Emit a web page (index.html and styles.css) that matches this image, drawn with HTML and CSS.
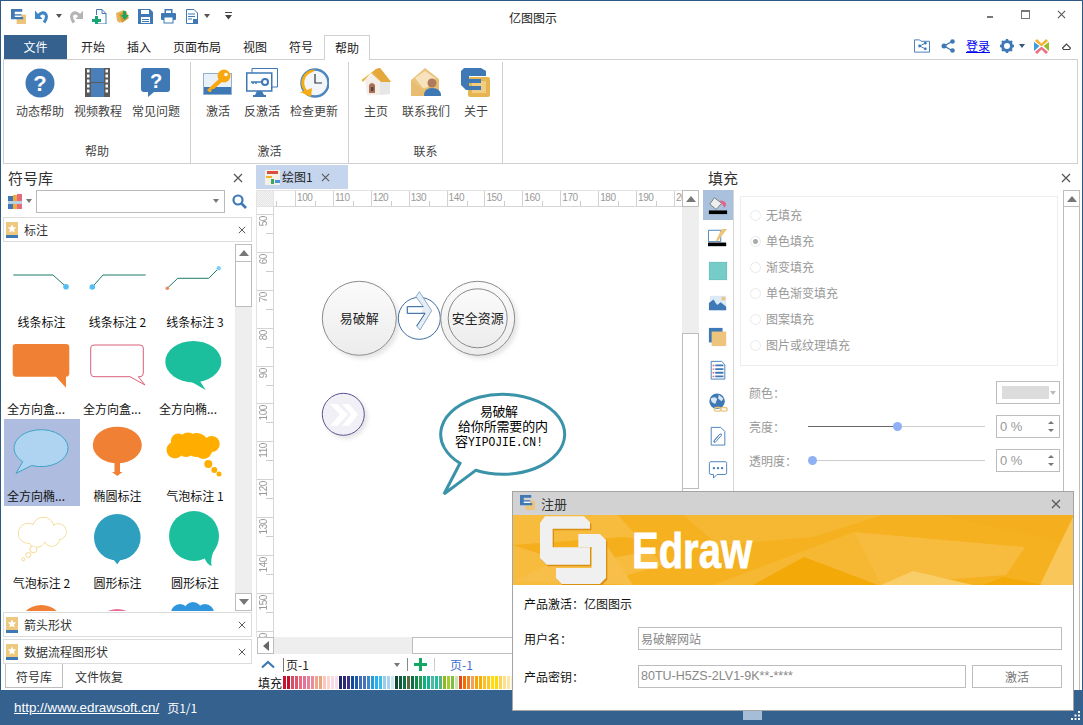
FILE: index.html
```html
<!DOCTYPE html>
<html lang="zh-CN">
<head>
<meta charset="utf-8">
<title>亿图图示</title>
<link rel="stylesheet" href="styles.css">
</head>
<body>
<svg class="defs" width="0" height="0" aria-hidden="true">
  <symbol id="logo" viewBox="0 0 16 16">
    <rect x="6" y="6" width="10" height="10" fill="#edc47c"/>
    <path d="M0 0H12V3H4V5.500H11V8.500H13V11H0Z" fill="#3f79b5"/>
    <path d="M4 7H11V8.500H4Z" fill="#fff"/>
  </symbol>
  <symbol id="star" viewBox="0 0 12 16">
    <rect width="12" height="16" fill="#edc97f"/>
    <rect y="13" width="12" height="3" fill="#3f79b5"/>
    <path d="M6 2.500 7.300 5.300 10.300 5.600 8 7.600 8.700 10.600 6 9 3.300 10.600 4 7.600 1.700 5.600 4.700 5.300Z" fill="#fff"/>
  </symbol>
  <symbol id="x" viewBox="0 0 10 10">
    <path d="M1 1 9 9M9 1 1 9" stroke="#555" stroke-width="1.200" fill="none"/>
  </symbol>
</svg>
<div class="app">
  <header class="titlebar">
    <div class="qat">
      <svg class="q" viewBox="0 0 16 16"><use href="#logo"/></svg>
      <svg class="q" viewBox="0 0 15 15"><path d="M4 7Q8 2 11.500 5Q14 8 10 13.500" fill="none" stroke="#3f86c6" stroke-width="3"/><path d="M1 1.500V10H8.500Z" fill="#3f86c6"/></svg>
      <span class="caret q-caret"></span>
      <svg class="q" viewBox="0 0 15 15"><path d="M11 7Q7 2 3.500 5Q1 8 5 13.500" fill="none" stroke="#b4b4b4" stroke-width="3"/><path d="M14 1.500V10H6.500Z" fill="#b4b4b4"/></svg>
      <svg class="q" viewBox="0 0 15 15"><path d="M4.500 6V.5H10L14 4.500V15H6" fill="#fff" stroke="#3f79b5"/><path d="M10 .5V4.500H14" fill="none" stroke="#3f79b5"/><path d="M3 7H6V10H9V13H6V16H3V13H0V10H3Z" fill="#17a673"/></svg>
      <svg class="q" viewBox="0 0 15 15"><path d="M1 4 9 1 12 8 5 14 2 12Z" fill="#e8b458"/><path d="M4 5 11 2 14 9 7 14Z" fill="#d69a3a"/><path d="M8 2H11V6H14L9.500 11 6 6H8Z" fill="#1ea55b"/></svg>
      <svg class="q" viewBox="0 0 15 15"><path d="M0 0H12L15 3V15H0Z" fill="#3f79b5"/><rect x="3" y="1" width="8" height="4" fill="#fff"/><rect x="3" y="8" width="9" height="6" fill="#fff"/><rect x="4" y="10" width="7" height="1" fill="#3f79b5"/><rect x="4" y="12" width="7" height="1" fill="#3f79b5"/></svg>
      <svg class="q" viewBox="0 0 15 15"><rect x="3.500" y="0" width="8" height="5" fill="#3f79b5"/><rect x="5" y="1.500" width="5" height="3" fill="#fff"/><rect y="4" width="15" height="7" rx="1" fill="#3f79b5"/><rect x="3" y="8" width="9" height="6" fill="#fff" stroke="#3f79b5"/></svg>
      <svg class="q q-doc" viewBox="0 0 12 15"><path d="M.5 .5H8L11.500 4V14.500H.5Z" fill="#fff" stroke="#3f79b5"/><path d="M2 5H9M2 7.500H9M2 10H6" stroke="#3f79b5"/><rect x="7" y="10" width="5" height="5" fill="#3f79b5"/></svg>
      <span class="caret q-caret"></span>
      <svg class="q-menu" viewBox="0 0 7 8"><path d="M0 0H7V1H0ZM0 3H7L3.500 7.500Z" fill="#444"/></svg>
    </div>
    <h1 class="app-title">亿图图示</h1>
    <div class="win-controls">
      <span class="win-min"></span>
      <span class="win-max"></span>
      <svg class="win-close" viewBox="0 0 10 10"><use href="#x"/></svg>
    </div>
  </header>

  <nav class="tabbar">
    <a class="tab-file">文件</a>
    <a class="tab">开始</a>
    <a class="tab">插入</a>
    <a class="tab">页面布局</a>
    <a class="tab">视图</a>
    <a class="tab">符号</a>
    <a class="tab tab-active">帮助</a>
    <div class="tab-tools">
      <svg class="tool-icon" viewBox="0 0 17 14"><path d="M.5 .5H6L7.500 2H16.500V13.500H.5Z" fill="#fff" stroke="#3f79b5"/><path d="M12 4 6 7 12 10" fill="none" stroke="#3f79b5"/><circle cx="6" cy="7" r="1.500" fill="#3f79b5"/><circle cx="12" cy="4" r="1.500" fill="#3f79b5"/><circle cx="12" cy="10" r="1.500" fill="#3f79b5"/></svg>
      <svg class="tool-icon tool-share" viewBox="0 0 14 14"><path d="M11 2.500 3 7 11 11.500" fill="none" stroke="#3f79b5" stroke-width="1.400"/><circle cx="3" cy="7" r="2.500" fill="#3f79b5"/><circle cx="11.500" cy="2.500" r="2.300" fill="#3f79b5"/><circle cx="11.500" cy="11.500" r="2.300" fill="#3f79b5"/></svg>
      <a class="login">登录</a>
      <svg class="tool-icon tool-gear" viewBox="0 0 14 14"><circle cx="7" cy="7" r="4.500" fill="none" stroke="#3f79b5" stroke-width="3"/><path d="M7 0V14M0 7H14M2 2 12 12M12 2 2 12" stroke="#3f79b5" stroke-width="2.400" stroke-dasharray="2.500 9 2.500"/></svg>
      <span class="caret caret-dark"></span>
      <svg class="tool-icon tool-brand" viewBox="0 0 15 15"><path d="M3 0 7.500 4.500 12 0 14 2 8 7H7L1 2Z" fill="#f6b02c"/><path d="M0 3 5.500 7 0 12Z" fill="#3d9be0"/><path d="M15 3 9.500 7 15 12Z" fill="#9bbb2f"/><path d="M7 8H8L14 13 12 15 7.500 10.500 3 15 1 13Z" fill="#ee6d7f"/></svg>
      <svg class="tool-collapse" viewBox="0 0 9 7"><path d="M.5 5 4.500 1 8.500 5 7.500 6.500H1.500Z" fill="none" stroke="#444" stroke-width="1.200"/></svg>
    </div>
  </nav>

  <section class="ribbon">
    <div class="rgroup">
      <div class="rbtns">
        <div class="rbtn rbtn-58">
          <svg class="ricon" viewBox="0 0 30 30"><circle cx="15" cy="15" r="14.500" fill="#3f79b5"/><text x="15" y="23" class="glyph-q">?</text></svg>
          <span>动态帮助</span>
        </div>
        <div class="rbtn rbtn-58">
          <svg class="ricon" viewBox="0 0 30 30"><rect x="2" y="0" width="25" height="29" fill="#5a5a5a"/><rect x="8" y="0" width="13" height="14" fill="#4a7fb9"/><rect x="8" y="15" width="13" height="14" fill="#4a7fb9"/><path d="M4 3H6.500M4 8H6.500M4 13H6.500M4 18H6.500M4 23H6.500M22.500 3H25M22.500 8H25M22.500 13H25M22.500 18H25M22.500 23H25" stroke="#fff" stroke-width="3"/></svg>
          <span>视频教程</span>
        </div>
        <div class="rbtn rbtn-58">
          <svg class="ricon" viewBox="0 0 30 30"><path d="M3 0H26Q29 0 29 3V21Q29 24 26 24H13L7 29V24H3Q0 24 0 21V3Q0 0 3 0Z" fill="#3f79b5"/><text x="15" y="20" class="glyph-q glyph-q-sm">?</text></svg>
          <span>常见问题</span>
        </div>
      </div>
      <div class="rgroup-label">帮助</div>
    </div>
    <div class="rgroup">
      <div class="rbtns rbtns-2">
        <div class="rbtn rbtn-44">
          <svg class="ricon" viewBox="0 0 30 30"><rect x=".5" y="5.500" width="28" height="21" fill="#eaf0f7" stroke="#8fb0d2"/><rect x="1" y="19" width="27" height="7" fill="#3f79b5"/><circle cx="21" cy="8" r="6.500" fill="#f8a80e"/><circle cx="23" cy="6.500" r="1.800" fill="#fff"/><path d="M17 10 4 22 6 24 8 24 9 21 11 21 20 13Z" fill="#f8a80e"/></svg>
          <span>激活</span>
        </div>
        <div class="rbtn rbtn-44">
          <svg class="ricon ricon-w" viewBox="0 0 32 30"><path d="M6 .5H31.500V19H26" fill="#fff" stroke="#3f79b5"/><path d="M6 .5V5" stroke="#3f79b5"/><rect x=".75" y="5" width="25" height="18" fill="#fff" stroke="#3f79b5" stroke-width="1.500"/><path d="M9 27H18L16 23H11Z" fill="#3f79b5"/><rect x="7" y="27" width="13" height="2" fill="#3f79b5"/><circle cx="19" cy="14" r="3" fill="none" stroke="#3f79b5" stroke-width="2"/><path d="M5 14H16M7 14V16M10 14V16" stroke="#3f79b5" stroke-width="1.500"/></svg>
          <span>反激活</span>
        </div>
        <div class="rbtn rbtn-60">
          <svg class="ricon" viewBox="0 0 30 30"><circle cx="16" cy="15" r="13.500" fill="#f2f6fa" stroke="#4f86bd" stroke-width="2.500"/><path d="M16 1.500A13.500 13.500 0 0 0 5 23L1 24 12 29 13 20 8 22A11 11 0 0 1 14 4Z" fill="#f8ac13"/><path d="M16 6V15H23" fill="none" stroke="#333" stroke-width="1.200"/></svg>
          <span>检查更新</span>
        </div>
      </div>
      <div class="rgroup-label">激活</div>
    </div>
    <div class="rgroup">
      <div class="rbtns rbtns-2">
        <div class="rbtn rbtn-44">
          <svg class="ricon" viewBox="0 0 30 30"><path d="M4 12 12 5 19 12 19 27 6 27Z" fill="#f3eee8"/><path d="M19 12H29V26L19 27Z" fill="#e6e6e6"/><path d="M.5 12 15 1 19 0 30 14 19 13 10 5 2 14Z" fill="#e9b348"/><path d="M15 1 19 0 30 14 20 14 12 4Z" fill="#e5a93b"/><path d="M8 25V17Q11 13 14 17V25Z" fill="#ad6f53"/><rect x="10" y="19" width="2.500" height="4" fill="#5a4238"/></svg>
          <span>主页</span>
        </div>
        <div class="rbtn rbtn-56">
          <svg class="ricon" viewBox="0 0 30 30"><path d="M0 12 14 0 28 11V28H0Z" fill="#ebc47c"/><path d="M4 10 14 3 24 10 24 18 12 20Z" fill="#f6e3bd"/><path d="M0 28V13L13 22 28 11V28Z" fill="#e9bd70"/><circle cx="21" cy="15" r="4.500" fill="#b07a5d"/><path d="M13 28Q13 20 21 20Q30 20 30 28Z" fill="#3f79b5"/></svg>
          <span>联系我们</span>
        </div>
        <div class="rbtn rbtn-44">
          <svg class="ricon" viewBox="0 0 30 30"><rect x="7" y="9" width="22" height="20" rx="2" fill="#e5b552"/><rect x="11" y="13" width="14" height="12" fill="#f0cd81"/><path d="M3 0H20L25 3V8H8V11H20V15H8V18H20V22H5L0 17V3Z" fill="#3f79b5"/></svg>
          <span>关于</span>
        </div>
      </div>
      <div class="rgroup-label">联系</div>
    </div>
  </section>

  <main class="workspace">
    <aside class="library">
      <div class="panel-head">
        <h2>符号库</h2>
        <svg class="panel-x" viewBox="0 0 10 10"><use href="#x"/></svg>
      </div>
      <div class="search-row">
        <svg class="books" viewBox="0 0 14 15"><rect x="0" y="2" width="5" height="13" fill="#3f79b5"/><rect x="5" y="1" width="4" height="14" fill="#f2a93b"/><rect x="9" y="0" width="5" height="15" fill="#e66a7a"/><rect y="7" width="14" height="3" fill="#b9cfe2"/></svg>
        <span class="caret caret-gray"></span>
        <div class="combo"><span class="caret caret-gray"></span></div>
        <svg class="search-icon" viewBox="0 0 15 15"><circle cx="6" cy="6" r="4.500" fill="none" stroke="#3f79b5" stroke-width="2.200"/><path d="M9.500 9.500 14 14" stroke="#3f79b5" stroke-width="2.600"/></svg>
      </div>
      <div class="cat-row">
        <svg class="cat-star"><use href="#star"/></svg>
        <span>标注</span>
        <svg class="cat-x" viewBox="0 0 10 10"><use href="#x"/></svg>
      </div>
      <div class="shape-area">
        <div class="shape-grid">
          <figure class="cell">
            <svg class="shape" viewBox="0 0 76 66"><path d="M9.300 30H49L62 41.700" fill="none" stroke="#1c7d66"/><circle cx="62" cy="41.700" r="2.800" fill="#55bff2"/></svg>
            <figcaption>线条标注</figcaption>
          </figure>
          <figure class="cell">
            <svg class="shape" viewBox="0 0 76 66"><path d="M12.300 42 23 30H65.700" fill="none" stroke="#1c7d66"/><circle cx="12.300" cy="42" r="2.800" fill="#55bff2"/></svg>
            <figcaption>线条标注 2</figcaption>
          </figure>
          <figure class="cell">
            <svg class="shape" viewBox="0 0 76 66"><path d="M11.300 43.300 21.700 33.300H52.700L62.700 23.300" fill="none" stroke="#1c7d66"/><circle cx="11.300" cy="43.300" r="1.800" fill="#f08a5a"/><circle cx="62.700" cy="23.300" r="2.200" fill="#7fd0f5"/></svg>
            <figcaption>线条标注 3</figcaption>
          </figure>
          <figure class="cell">
            <svg class="shape" viewBox="0 0 76 66"><path d="M12 12H62Q65.300 12 65.300 15V41Q65.300 44.700 62 44.700V55.700L52 44.700H12Q8.700 44.700 8.700 41V15Q8.700 12 12 12Z" fill="#f08034"/></svg>
            <figcaption class="left">全方向盒...</figcaption>
          </figure>
          <figure class="cell">
            <svg class="shape" viewBox="0 0 76 66"><path d="M14 13H60Q63.300 13 63.300 16V41Q63.300 44.700 60 44.700H58.300L65 53 50 44.700H14Q10.700 44.700 10.700 41V16Q10.700 13 14 13Z" fill="#fff" stroke="#d9607a"/></svg>
            <figcaption class="left">全方向盒...</figcaption>
          </figure>
          <figure class="cell">
            <svg class="shape" viewBox="0 0 76 66"><ellipse cx="37.300" cy="29.700" rx="28" ry="20.700" fill="#1cbf9d"/><path d="M34 49 49.700 58 42 46Z" fill="#1cbf9d"/></svg>
            <figcaption class="left">全方向椭...</figcaption>
          </figure>
          <figure class="cell cell-selected">
            <svg class="shape" viewBox="0 0 76 66"><path d="M18.700 42.700A27 18.500 0 1 1 27.700 46.500L12 54.300Z" fill="#aed4f2" stroke="#3fa5c5"/></svg>
            <figcaption class="left">全方向椭...</figcaption>
          </figure>
          <figure class="cell">
            <svg class="shape" viewBox="0 0 76 66"><ellipse cx="37.300" cy="26" rx="24.500" ry="18.300" fill="#f08034"/><path d="M34.500 42H40V53H42.500L37.300 57 32 53H34.500Z" fill="#f08034"/></svg>
            <figcaption>椭圆标注</figcaption>
          </figure>
          <figure class="cell">
            <svg class="shape" viewBox="0 0 76 66"><g fill="#ffae00"><circle cx="19" cy="31" r="8.500"/><circle cx="22.300" cy="22" r="7.500"/><circle cx="40.700" cy="26" r="12"/><circle cx="55.700" cy="25" r="8"/><circle cx="32" cy="22" r="8.500"/><circle cx="47.300" cy="31" r="9"/><circle cx="30" cy="30" r="8"/><circle cx="52.300" cy="45" r="4"/><circle cx="58.300" cy="51" r="3"/><circle cx="63" cy="55" r="2.500"/></g></svg>
            <figcaption>气泡标注 1</figcaption>
          </figure>
          <figure class="cell">
            <svg class="shape" viewBox="0 0 76 66"><g fill="#fff" stroke="#f6d98f"><circle cx="24.300" cy="27.300" r="10"/><circle cx="39.300" cy="22.300" r="11"/><circle cx="54.300" cy="25.700" r="8"/><circle cx="32.700" cy="32.300" r="9"/><circle cx="47.700" cy="32.300" r="8"/><circle cx="29.300" cy="43.300" r="3.500"/><circle cx="24.300" cy="49" r="2.500"/><circle cx="19.300" cy="53.300" r="1.500"/></g><g fill="#fff"><circle cx="24.300" cy="27.300" r="9.500"/><circle cx="39.300" cy="22.300" r="10.500"/><circle cx="54.300" cy="25.700" r="7.500"/><circle cx="32.700" cy="32.300" r="8.500"/><circle cx="47.700" cy="32.300" r="7.500"/></g></svg>
            <figcaption>气泡标注 2</figcaption>
          </figure>
          <figure class="cell">
            <svg class="shape" viewBox="0 0 76 66"><circle cx="37.300" cy="31.300" r="23.300" fill="#2e9fbe"/><path d="M33 53 37.300 58.300 41 53Z" fill="#2e9fbe"/></svg>
            <figcaption>圆形标注</figcaption>
          </figure>
          <figure class="cell">
            <svg class="shape" viewBox="0 0 76 66"><circle cx="38" cy="30" r="25" fill="#1cbf9d"/><path d="M48 50Q53 52 51 49L58 44Q54 54 55.700 60Q50 58 48 50Z" fill="#1cbf9d"/></svg>
            <figcaption>圆形标注</figcaption>
          </figure>
          <figure class="cell">
            <svg class="shape" viewBox="0 0 76 66"><circle cx="37.300" cy="35" r="23" fill="#f08034"/></svg>
          </figure>
          <figure class="cell">
            <svg class="shape" viewBox="0 0 76 66"><circle cx="37.300" cy="39" r="23" fill="#e76d9a"/></svg>
          </figure>
          <figure class="cell">
            <svg class="shape" viewBox="0 0 76 66"><g fill="#2f96dd"><circle cx="24" cy="20" r="9"/><circle cx="37" cy="18" r="9"/><circle cx="49" cy="20" r="9"/></g></svg>
          </figure>
        </div>
        <div class="scrollbar scrollbar-lib">
          <span class="sb-btn sb-up"></span>
          <span class="sb-thumb"></span>
          <span class="sb-btn sb-down"></span>
        </div>
      </div>
      <div class="cat-row cat-row-low">
        <svg class="cat-star"><use href="#star"/></svg>
        <span>箭头形状</span>
        <svg class="cat-x" viewBox="0 0 10 10"><use href="#x"/></svg>
      </div>
      <div class="cat-row cat-row-low2">
        <svg class="cat-star"><use href="#star"/></svg>
        <span>数据流程图形状</span>
        <svg class="cat-x" viewBox="0 0 10 10"><use href="#x"/></svg>
      </div>
      <div class="lib-tabs">
        <span class="lib-tab lib-tab-on">符号库</span>
        <span class="lib-tab">文件恢复</span>
      </div>
    </aside>

    <section class="center">
      <div class="doc-tabs">
        <div class="doc-tab">
          <svg class="doc-icon" viewBox="0 0 15 15"><rect width="15" height="15" fill="#f4f1e6"/><rect x="2" y="1" width="11" height="3" fill="#d94f3d"/><rect x="1" y="6" width="6" height="2" fill="#f1b32b"/><rect x="6" y="9" width="3" height="5" fill="#39a85c"/><rect x="10" y="10" width="5" height="3" fill="#4c94d8"/></svg>
          <span>绘图1</span>
          <svg class="doc-x" viewBox="0 0 10 10"><use href="#x"/></svg>
        </div>
      </div>
      <div class="doc-grid">
        <div class="ruler-corner"></div>
        <div class="hruler">
          <span>100</span><span>110</span><span>120</span><span>130</span><span>140</span><span>150</span><span>160</span><span>170</span><span>180</span><span>190</span><span>200</span>
        </div>
        <div class="scrollbar scrollbar-doc">
          <span class="sb-btn sb-up"></span>
          <span class="sb-track"></span>
          <span class="sb-thumb"></span>
        </div>
        <div class="vruler">
          <span><b>50</b></span><span><b>60</b></span><span><b>70</b></span><span><b>80</b></span><span><b>90</b></span><span><b>100</b></span><span><b>110</b></span><span><b>120</b></span><span><b>130</b></span><span><b>140</b></span><span><b>150</b></span><span><b>160</b></span>
        </div>
        <div class="canvas">
          <svg class="drawing" viewBox="274 207 407 430">
            <defs>
              <linearGradient id="disc" x1="0" y1="0" x2="0" y2="1"><stop offset="0" stop-color="#fbfbfb"/><stop offset="1" stop-color="#ececec"/></linearGradient>
              <filter id="soft" x="-20%" y="-20%" width="150%" height="150%"><feDropShadow dx="3" dy="3" stdDeviation="2" flood-color="#000" flood-opacity=".1"/></filter>
            </defs>
            <circle cx="359.300" cy="318.300" r="37" fill="url(#disc)" stroke="#8a8a8a" filter="url(#soft)"/>
            <text x="359.300" y="322.500" class="dtext">易破解</text>
            <circle cx="419.300" cy="318.300" r="21" fill="#fff" stroke="#3e6da3"/>
            <path d="M419.300 291.700 431.700 310.700 420 330 416.700 326 425 313.300H407.300V306.700H423.300L416 296.700Z" fill="#e6edf5" stroke="#7099c3" stroke-width=".8"/>
            <path d="M423.300 306.700H407.300V313.300H425L416.700 326" fill="#fff" stroke="#2f659e"/>
            <circle cx="477.700" cy="318.300" r="37" fill="url(#disc)" stroke="#8a8a8a" filter="url(#soft)"/>
            <circle cx="477.700" cy="318.300" r="29.500" fill="url(#disc)" stroke="#8a8a8a"/>
            <text x="477.700" y="322.500" class="dtext">安全资源</text>
            <circle cx="343.300" cy="414.300" r="21" fill="#f1f0f6" stroke="#5e4f8e" filter="url(#soft)"/>
            <path d="M330 404 337 404 348 414.500 337 426 330 426 340 414.500ZM342 404 349 404 358 414.500 349 426 342 426 351 414.500Z" fill="#fff"/>
            <path d="M460 463.300A62 40 0 1 1 475.700 470.300L444 494Z" fill="#fff" stroke="#3a93a8" stroke-width="3"/>
            <text x="480" y="415.500" class="btext" textLength="38">易破解</text>
            <text x="458" y="431" class="btext" textLength="90">给你所需要的内</text>
            <text x="455" y="446" class="btext">容</text>
            <text x="468" y="446" class="btext-latin" textLength="75" lengthAdjust="spacingAndGlyphs">YIPOJIE.CN!</text>
          </svg>
        </div>
        <div class="hscroll">
          <span class="hs-left"></span>
          <span class="hs-thumb"></span>
        </div>
      </div>
      <div class="page-bar">
        <svg class="page-up" viewBox="0 0 14 9"><path d="M1 7.500 7 2 13 7.500" fill="none" stroke="#3f79b5" stroke-width="2.200"/></svg>
        <span class="page-sel">页-1</span>
        <span class="caret caret-gray page-caret"></span>
        <span class="page-sep"></span>
        <svg class="page-add" viewBox="0 0 13 13"><path d="M5 0H8V5H13V8H8V13H5V8H0V5H5Z" fill="#12a863"/></svg>
        <span class="page-sep page-sep-light"></span>
        <span class="page-cur">页-1</span>
      </div>
      <div class="palette-row">
        <span class="palette-label">填充</span>
        <div class="palette">
          <i style="background:#c9152c"></i><i style="background:#c30f2a"></i><i style="background:#d4506a"></i><i style="background:#e0556f"></i><i style="background:#ec6a80"></i><i style="background:#e27399"></i><i style="background:#e3829a"></i><i style="background:#e98b9b"></i><i style="background:#f2a585"></i><i style="background:#e8a57e"></i><i style="background:#fcc6bd"></i><i style="background:#fbd5cf"></i><i style="background:#f3dce3"></i><i style="background:#f9dcea"></i><i style="background:#1c2a6b"></i><i style="background:#2a2a70"></i><i style="background:#3f2f8a"></i><i style="background:#0f4a9d"></i><i style="background:#1f5aa7"></i><i style="background:#3d6fb5"></i><i style="background:#4c6fb5"></i><i style="background:#3c8ccc"></i><i style="background:#2a9ad8"></i><i style="background:#20b3f0"></i><i style="background:#35bdf0"></i><i style="background:#9ccbe8"></i><i style="background:#a8d3ee"></i><i style="background:#cfe7f0"></i><i style="background:#0d4d2e"></i><i style="background:#0f5a3a"></i><i style="background:#0c7048"></i><i style="background:#5d6b3a"></i><i style="background:#0f6e45"></i><i style="background:#0f8a50"></i><i style="background:#2a9a4c"></i><i style="background:#0fb07f"></i><i style="background:#14b58d"></i><i style="background:#52b8a0"></i><i style="background:#20c0a0"></i><i style="background:#4fb587"></i><i style="background:#8fba1f"></i><i style="background:#a8c92f"></i><i style="background:#7dbf3f"></i><i style="background:#c8e2b0"></i><i style="background:#e2481c"></i><i style="background:#f07000"></i><i style="background:#f0852a"></i><i style="background:#f0a060"></i><i style="background:#f5a800"></i><i style="background:#f8ae00"></i><i style="background:#fbc028"></i><i style="background:#fcc72c"></i><i style="background:#ffe000"></i><i style="background:#ffd900"></i><i style="background:#fcd15a"></i><i style="background:#fce08a"></i><i style="background:#fbe6a8"></i><i style="background:#fdf0c8"></i>
        </div>
      </div>
    </section>

    <aside class="props">
      <div class="panel-head panel-head-props">
        <h2>填充</h2>
        <svg class="panel-x" viewBox="0 0 10 10"><use href="#x"/></svg>
      </div>
      <div class="props-body">
        <div class="strip">
          <div class="strip-item strip-on">
            <svg viewBox="0 0 22 22"><path d="M7 3 15 9 9 16 2 10Z" fill="#eee" stroke="#777"/><path d="M13 6Q20 6 20 11L18 14 15 9Z" fill="#e5628a"/><rect x="1" y="17" width="20" height="4" fill="#000"/></svg>
          </div>
          <div class="strip-item">
            <svg viewBox="0 0 22 22"><path d="M.5 2.500H14V15H.5Z" fill="#fff" stroke="#3f79b5"/><path d="M15 1H21L11 14 8 15Z" fill="#edc47c"/><rect y="16" width="20" height="4" fill="#000"/></svg>
          </div>
          <div class="strip-item">
            <svg viewBox="0 0 22 22"><rect x="1.500" y="1.500" width="19" height="19" fill="#76cdc8" stroke="#63bfb9"/></svg>
          </div>
          <div class="strip-item">
            <svg viewBox="0 0 22 22"><rect x="2" y="2" width="18" height="16" fill="#dceaf7"/><rect x="15" y="3" width="4" height="4" fill="#edc47c"/><path d="M1 18V10L6 6 10 12 14 9 20 14V18Z" fill="#3f79b5"/></svg>
          </div>
          <div class="strip-item">
            <svg viewBox="0 0 22 22"><rect x="1" y="1" width="15" height="16" fill="#3f79b5"/><rect x="4" y="5" width="16" height="16" fill="#edc47c"/></svg>
          </div>
          <div class="strip-item">
            <svg viewBox="0 0 22 22"><path d="M3.500 1.500H15L18.500 5V21H3.500Z" fill="#fff" stroke="#3f79b5"/><path d="M8 6H17M8 10H17M8 14H17M8 18H17" stroke="#3f79b5" stroke-width="2"/><path d="M5 6H7M5 10H7M5 14H7M5 18H7" stroke="#e66a7a" stroke-width="1.500"/></svg>
          </div>
          <div class="strip-item">
            <svg viewBox="0 0 22 22"><circle cx="10" cy="9" r="8.500" fill="#3f79b5"/><path d="M3 6Q9 3 10 7L8 12 4 10ZM12 2 17 6 15 9 11 6Z" fill="#dbe8f3"/><rect x="7" y="16" width="7" height="4" rx="2" fill="none" stroke="#edc47c" stroke-width="1.500"/><rect x="14" y="16" width="7" height="4" rx="2" fill="none" stroke="#edc47c" stroke-width="1.500"/></svg>
          </div>
          <div class="strip-item">
            <svg viewBox="0 0 22 22"><path d="M3.500 1.500H14L18.500 6V21H3.500Z" fill="#fff" stroke="#3f79b5"/><path d="M6 17 13 9Q15 8 15 10L8 18Q6 19 7 16L12 10" fill="none" stroke="#3f79b5"/></svg>
          </div>
          <div class="strip-item">
            <svg viewBox="0 0 22 22"><path d="M3 3H19Q20.500 3 20.500 5V15Q20.500 17 19 17H10L6 21V17H3Q1.500 17 1.500 15V5Q1.500 3 3 3Z" fill="#fff" stroke="#3f79b5"/><circle cx="6.500" cy="10" r="1.300" fill="#3f79b5"/><circle cx="11" cy="10" r="1.300" fill="#3f79b5"/><circle cx="15.500" cy="10" r="1.300" fill="#3f79b5"/></svg>
          </div>
        </div>
        <div class="props-main">
          <div class="fill-box">
            <div class="radio-row"><span class="radio"></span><span>无填充</span></div>
            <div class="radio-row"><span class="radio radio-on"></span><span>单色填充</span></div>
            <div class="radio-row"><span class="radio"></span><span>渐变填充</span></div>
            <div class="radio-row"><span class="radio"></span><span>单色渐变填充</span></div>
            <div class="radio-row"><span class="radio"></span><span>图案填充</span></div>
            <div class="radio-row"><span class="radio"></span><span>图片或纹理填充</span></div>
          </div>
          <div class="form-row form-row-first">
            <span class="form-label">颜色：</span>
            <div class="field field-color"><span class="color-chip"></span><span class="caret caret-light"></span></div>
          </div>
          <div class="form-row">
            <span class="form-label">亮度：</span>
            <div class="slider"><span class="slider-fill" style="width:50%"></span><span class="slider-knob" style="left:50%"></span></div>
            <div class="field field-spin"><span>0 %</span><span class="spin"><i class="spin-up"></i><i class="spin-down"></i></span></div>
          </div>
          <div class="form-row">
            <span class="form-label">透明度：</span>
            <div class="slider"><span class="slider-knob" style="left:2%"></span></div>
            <div class="field field-spin"><span>0 %</span><span class="spin"><i class="spin-up"></i><i class="spin-down"></i></span></div>
          </div>
        </div>
        <div class="scrollbar scrollbar-props">
          <span class="sb-btn sb-up"></span>
        </div>
      </div>
    </aside>
  </main>

  <footer class="status">
    <a class="status-link">http://www.edrawsoft.cn/</a>
    <span class="status-page">页1/1</span>
    <div class="status-tools">
      <span class="st st-on"><i></i></span>
      <span class="st"><i></i></span>
      <span class="st st-small"><i></i></span>
      <span class="st st-mid"><i></i></span>
      <span class="st st-zoom"><i></i></span>
      <span class="st st-dots"><i></i></span>
      <span class="st st-bar"><i></i></span>
      <span class="st st-small2"><i></i></span>
      <span class="st st-dots2"><i></i></span>
    </div>
    <svg class="grip" viewBox="0 0 10 10"><path d="M7 0H9V2H7ZM3.500 3.500H5.500V5.500H3.500ZM7 3.500H9V5.500H7ZM0 7H2V9H0ZM3.500 7H5.500V9H3.500ZM7 7H9V9H7Z" fill="#fff"/></svg>
  </footer>

  <div class="dialog">
    <div class="dlg-title">
      <svg class="dlg-logo"><use href="#logo"/></svg>
      <span>注册</span>
      <svg class="dlg-x" viewBox="0 0 10 10"><use href="#x"/></svg>
    </div>
    <svg class="banner" viewBox="0 0 560 70" preserveAspectRatio="none">
      <rect width="560" height="70" fill="#f5b120"/>
      <path d="M0 0H105L150 50 80 70H0Z" fill="#f7bb3e"/>
      <path d="M0 30 110 22 170 30 60 50Z" fill="#f5ae1c"/>
      <path d="M0 66 90 25 120 70Z" fill="#f7bf4a"/>
      <path d="M170 0H370L300 22 205 30Z" fill="#f6b733"/>
      <path d="M341 17 368 70H200Z" fill="#f6b733"/>
      <path d="M341 17 512 32 493 60 368 70Z" fill="#f7bb3e"/>
      <path d="M291 42 365 70H240Z" fill="#f3a908"/>
      <path d="M400 56 460 70H368Z" fill="#f9cd68"/>
      <path d="M430 0H560V30Z" fill="#f4ae1e"/>
      <path d="M560 2 527 70H560Z" fill="#f9c759"/>
      <path d="M490 62 530 70H470Z" fill="#f3a908"/>
      <g transform="translate(-3 -27) scale(.3333)">
        <path transform="translate(4 5)" d="M105 85H222L240 103V122H128V178H240V230H110L90 210V105Z" fill="#d98f10"/>
        <path transform="translate(4 5)" d="M205 138H270L288 156V270L270 288H155L138 270V240H245V178H205Z" fill="#d98f10"/>
        <path d="M105 85H222L240 103V122H128V178H240V230H110L90 210V105Z" fill="#f0f0f0"/>
        <path d="M205 138H270L288 156V270L270 288H155L138 270V240H245V178H205Z" fill="#f0f0f0"/>
      </g>
      <text x="119" y="53" class="brand" textLength="120" lengthAdjust="spacingAndGlyphs">Edraw</text>
    </svg>
    <div class="dlg-body">
      <div class="dlg-product">产品激活：亿图图示</div>
      <div class="dlg-row dlg-row-user">
        <span class="dlg-label">用户名：</span>
        <div class="dlg-input">易破解网站</div>
      </div>
      <div class="dlg-row">
        <span class="dlg-label">产品密钥：</span>
        <div class="dlg-input dlg-input-key">80TU-H5ZS-2LV1-9K**-****</div>
        <div class="dlg-btn">激活</div>
      </div>
    </div>
  </div>
</div>
</body>
</html>
```
FILE: styles.css
```css
* { box-sizing: border-box; }
html, body { margin: 0; padding: 0; }
body {
  width: 1083px;
  height: 725px;
  overflow: hidden;
  background: #fff;
  font-family: "Noto Sans CJK SC", "Liberation Sans", sans-serif;
  font-size: 12px;
  line-height: 16px;
  color: #333;
}
svg { display: block; flex: none; }
.defs { position: absolute; }
h1, h2, figure { margin: 0; font-weight: 400; }

.app {
  position: relative;
  width: 1083px;
  height: 725px;
  border: 1px solid #2d5a85;
  border-bottom: 0;
  display: flex;
  flex-direction: column;
}

/* title bar */
.titlebar {
  height: 34px;
  flex: none;
  display: grid;
  grid-template-columns: 1fr auto 1fr;
  align-items: center;
}
.qat { display: flex; align-items: center; padding-left: 10px; height: 30px; align-self: start; }
.q { width: 15px; height: 15px; margin-right: 8px; }
.q-doc { width: 12px; margin-right: 7px; margin-left: 2px; }
.q-menu { width: 7px; height: 8px; margin-left: 8px; }
.caret {
  display: block;
  flex: none;
  width: 0;
  height: 0;
  border: 3.5px solid transparent;
  border-top: 4px solid #555;
  border-bottom: 0;
}
.q-caret { margin: 0 7px 0 -1px; }
.app-title { font-size: 12px; color: #222; line-height: 16px; padding-right: 17px; }
.win-controls { display: flex; justify-content: flex-end; align-items: center; height: 30px; align-self: start; padding-right: 16px; }
.win-min { width: 6px; height: 2px; background: #777; margin: 2px 28px 0 0; }
.win-max { width: 9px; height: 9px; border: 1px solid #777; border-top-width: 2px; margin: -4px 27px 0 0; }
.win-close { width: 9px; height: 9px; margin-top: -4px; }

/* tabs */
.tabbar { height: 24px; flex: none; display: flex; padding-left: 3px; align-items: flex-start; }
.tab-file {
  width: 63px;
  height: 24px;
  background: #35618f;
  color: #fff;
  text-align: center;
  line-height: 24px;
  margin-right: 3px;
}
.tab { padding: 0 11px; line-height: 24px; color: #222; }
.tab-active {
  border: 1px solid #d0d0d0;
  border-bottom: 0;
  padding: 0 10px;
  background: #fff;
  height: 25px;
  position: relative;
  z-index: 1;
}
.tab-tools { margin-left: auto; height: 22px; display: flex; align-items: center; padding-right: 11px; }
.tool-icon { width: 16px; height: 14px; }
.tool-share { width: 14px; margin-left: 11px; }
.login { color: #0000f0; text-decoration: underline; margin-left: 11px; line-height: 16px; }
.tool-gear { width: 14px; margin-left: 10px; }
.caret-dark { border-top-color: #35557a; margin-left: 5px; }
.tool-brand { width: 15px; height: 15px; margin-left: 9px; }
.tool-collapse { width: 9px; height: 7px; margin-left: 13px; }

/* ribbon */
.ribbon {
  height: 105px;
  flex: none;
  margin: 0 4px 0 2px;
  border: 1px solid #d0d0d0;
  display: flex;
  padding-top: 2px;
}
.rgroup {
  display: flex;
  flex-direction: column;
  border-right: 1px solid #d0d0d0;
  height: 101px;
}
.rbtns { display: flex; padding: 0 5px 0 7px; height: 77px; }
.rbtns-2 { padding: 0 4px 0 5px; }
.rbtn { display: flex; flex-direction: column; align-items: center; padding-top: 6px; color: #444; white-space: nowrap; }
.rbtn-58 { width: 58px; }
.rbtn-44 { width: 44px; }
.rbtn-56 { width: 56px; }
.rbtn-60 { width: 60px; }
.ricon { width: 30px; height: 30px; margin-bottom: 5px; }
.ricon-w { width: 32px; }
.glyph-q { font: 700 22px "Liberation Sans", sans-serif; fill: #fff; text-anchor: middle; }
.glyph-q-sm { font-size: 20px; }
.rgroup-label { text-align: center; color: #444; line-height: 16px; margin-top: 4px; }

/* workspace */
.workspace { flex: 1; min-height: 0; display: flex; }

.library { width: 255px; flex: none; padding-left: 2px; display: flex; flex-direction: column; }
.panel-head { height: 26px; flex: none; display: flex; align-items: center; justify-content: space-between; padding: 2px 13px 0 5px; }
.panel-head h2 { font-size: 15px; line-height: 20px; color: #333; }
.panel-x { width: 10px; height: 10px; }
.search-row { height: 22px; flex: none; display: flex; align-items: center; padding-left: 5px; }
.books { width: 14px; height: 15px; }
.caret-gray { border-top-color: #777; }
.search-row > .caret { margin: 0 4px 0 4px; }
.combo { width: 189px; height: 23px; border: 1px solid #b9b9b9; display: flex; align-items: center; justify-content: flex-end; padding-right: 5px; }
.search-icon { width: 15px; height: 15px; margin-left: 7px; }
.cat-row {
  width: 249px;
  height: 25px;
  flex: none;
  margin-top: 5px;
  border: 1px solid #dcdcdc;
  display: flex;
  align-items: center;
  padding: 0 5px 0 2px;
  color: #333;
}
.cat-star { width: 12px; height: 16px; margin-right: 6px; }
.cat-x { width: 8px; height: 8px; margin-left: auto; }
.cat-row-low { margin-top: 1px; }
.cat-row-low2 { margin-top: 2px; }
.shape-area { height: 369px; flex: none; display: flex; padding: 2px 0 0 1px; overflow: hidden; }
.shape-grid {
  width: 231px;
  height: 366px;
  margin-top: 1px;
  display: grid;
  grid-template-columns: 76px 76px 79px;
  grid-auto-rows: 87px;
  overflow: hidden;
}
.cell { display: flex; flex-direction: column; color: #222; }
.cell-selected { background: #adbcdf; }
.shape { width: 76px; height: 66px; flex: none; }
.cell figcaption { text-align: center; line-height: 16px; margin-top: 3px; padding-right: 1px; white-space: nowrap; color: #111; }
.cell figcaption.left { text-align: left; padding-left: 3px; }

.scrollbar { width: 17px; flex: none; background: #eee; display: flex; flex-direction: column; }
.scrollbar-lib { height: 367px; justify-content: flex-start; }
.sb-btn { display: flex; align-items: center; justify-content: center; height: 18px; flex: none; background: #fff; border: 1px solid #bdbdbd; }
.sb-btn::after { content: ""; width: 0; height: 0; border: 5px solid transparent; }
.sb-up::after { border-bottom: 6px solid #777; border-top: 0; }
.sb-down::after { border-top: 6px solid #777; border-bottom: 0; }
.sb-thumb { height: 45px; flex: none; background: #fff; border: 1px solid #bdbdbd; border-top: 0; }
.scrollbar-lib .sb-down { margin-top: auto; }

.lib-tabs { display: flex; height: 25px; flex: none; padding-left: 2px; }
.lib-tab { padding: 0 12px; line-height: 26px; color: #333; }
.lib-tab-on { width: 58px; padding: 0; text-align: center; border: 1px solid #bdbdbd; border-top: 0; height: 24px; line-height: 25px; }

/* center */
.center { width: 443px; flex: none; display: flex; flex-direction: column; }
.doc-tabs { height: 26px; flex: none; padding-top: 1px; }
.doc-tab { width: 92px; height: 24px; background: #c5d5ee; display: flex; align-items: center; padding-left: 9px; color: #222; }
.doc-icon { width: 15px; height: 15px; margin-right: 2px; }
.doc-x { width: 9px; height: 9px; margin-left: 8px; }
.doc-grid {
  display: grid;
  grid-template-columns: 18px 408px 17px;
  grid-template-rows: 17px 430px 17px;
  flex: none;
}
.ruler-corner {
  border: 1px solid #e3e3e3;
  background: repeating-conic-gradient(#e4e4e4 0 25%, #f4f4f4 0 50%) 0 0 / 2px 2px;
}
.hruler {
  display: flex;
  overflow: hidden;
  border-bottom: 1px solid #d6d6d6;
  border-top: 1px solid #e3e3e3;
  padding-left: 21px;
  background: linear-gradient(#ccc, #ccc) 2px 100% / 1px 5px no-repeat;
}
.hruler span {
  width: 37.9px;
  flex: none;
  border-left: 1px solid #d2d2d2;
  font: 10px/13px "Liberation Sans", sans-serif;
  letter-spacing: -.4px;
  color: #999;
  padding-left: 1px;
  position: relative;
}
.hruler span::after { content: ""; position: absolute; left: 19px; bottom: 0; width: 1px; height: 5px; background: #ccc; }
.scrollbar-doc { grid-row: 1 / span 2; grid-column: 3; height: 447px; overflow: hidden; }
.scrollbar-doc .sb-up { height: 17px; }
.sb-track { height: 126px; flex: none; }
.scrollbar-doc .sb-thumb { height: 156px; border-top: 1px solid #bdbdbd; }
.scrollbar-doc::after { content: ""; flex: 1; background: #fff; border-left: 1px solid #bdbdbd; }
.vruler {
  grid-row: 2;
  grid-column: 1;
  overflow: hidden;
  border-left: 1px solid #e3e3e3;
  border-right: 1px solid #d6d6d6;
  padding-top: 7px;
}
.vruler span {
  display: block;
  height: 37.9px;
  border-top: 1px solid #d2d2d2;
  position: relative;
}
.vruler span::after { content: ""; position: absolute; right: 0; top: 18px; width: 7px; height: 1px; background: #ccc; }
.vruler b {
  display: block;
  writing-mode: vertical-rl;
  transform: rotate(180deg);
  font: 10px/12px "Liberation Sans", sans-serif;
  letter-spacing: -.4px;
  color: #999;
  width: 12px;
  margin: 1px 0 0 1px;
}
.canvas { grid-row: 2; grid-column: 2; overflow: hidden; background: #fff; }
.drawing { width: 407px; height: 430px; }
.dtext { font-size: 13px; fill: #222; text-anchor: middle; }
.btext { font: 13px "Noto Sans CJK SC", monospace; fill: #000; }
.btext-latin { font: 13px "Liberation Mono", monospace; fill: #000; }
.hscroll { grid-row: 3; grid-column: 1 / span 3; display: flex; background: #eee; margin-left: 1px; }
.hs-left { width: 17px; background: #fff; border: 1px solid #bdbdbd; display: flex; align-items: center; justify-content: center; }
.hs-left::after { content: ""; border: 5px solid transparent; border-right: 6px solid #666; border-left: 0; }
.hs-thumb { margin-left: 138px; flex: 1; background: #fff; border: 1px solid #bdbdbd; }

.page-bar { height: 21px; flex: none; display: flex; align-items: center; padding-left: 5px; }
.page-up { width: 14px; height: 9px; }
.page-sel { margin-left: 8px; width: 112px; padding-left: 2px; border-left: 1px solid #777; line-height: 14px; color: #222; }
.page-caret { margin-left: -1px; }
.page-sep { width: 1px; height: 13px; background: #888; margin: 0 6px 0 7px; flex: none; }
.page-sep-light { background: #ccc; margin: 0 15px 0 7px; }
.page-add { width: 13px; height: 13px; }
.page-cur { color: #3d6fd0; }
.palette-row { height: 15px; flex: none; display: flex; align-items: center; padding-left: 2px; overflow: hidden; }
.palette-label { width: 25px; flex: none; color: #111; line-height: 15px; }
.palette { display: flex; gap: 1px; }
.palette i { display: block; width: 3px; height: 13px; flex: none; }

/* right panel */
.props { flex: 1; min-width: 0; margin-left: 4px; display: flex; flex-direction: column; }
.panel-head-props { padding: 2px 11px 0 5px; }
.props-body { flex: 1; min-height: 0; display: flex; }
.strip { width: 31px; flex: none; border-right: 1px solid #d6d6d6; }
.strip-item { width: 30px; height: 33px; display: flex; justify-content: center; padding-top: 6px; }
.strip-item svg { width: 20px; height: 20px; }
.strip-on { background: #a9c1dc; height: 30px; padding-top: 5px; margin-bottom: 2px; }
.props-main { width: 329px; flex: none; padding-top: 6px; color: #999; }
.fill-box { margin-left: 6px; width: 318px; height: 170px; border: 1px solid #ededed; padding-top: 5px; }
.radio-row { height: 26px; display: flex; align-items: center; padding-left: 9px; }
.radio { width: 11px; height: 11px; border-radius: 50%; border: 1px solid #eaeaea; background: #fff; margin-right: 5px; flex: none; }
.radio-on { background: radial-gradient(circle, #aaa 0 2px, #fff 3px); }
.form-row { display: flex; align-items: center; height: 23px; margin-top: 11px; padding-left: 15px; }
.form-row-first { margin-top: 15px; }
.form-label { width: 59px; flex: none; }
.field { margin-left: auto; width: 64px; height: 23px; border: 1px solid #bdbdbd; flex: none; display: flex; align-items: center; margin-right: 3px; }
.field-color { padding-left: 5px; justify-content: space-between; padding-right: 3px; }
.color-chip { width: 47px; height: 13px; background: #dcdcdc; }
.caret-light { border-top-color: #bbb; }
.field-spin { padding: 0 5px 0 3px; justify-content: space-between; font-family: "Liberation Sans", sans-serif; font-size: 13px; color: #999; }
.spin { display: flex; flex-direction: column; gap: 5px; }
.spin i { display: block; width: 0; height: 0; border: 3px solid transparent; }
.spin .spin-up { border-bottom: 3px solid #777; border-top: 0; }
.spin .spin-down { border-top: 3px solid #777; border-bottom: 0; }
.slider { width: 177px; height: 1px; background: #ccc; position: relative; flex: none; }
.slider-fill { display: block; height: 1px; background: #666; }
.slider-knob { position: absolute; top: -4px; width: 9px; height: 9px; margin-left: -4px; border-radius: 50%; background: #8fb0f5; }
.scrollbar-props { background: #fff; border: 1px solid #bdbdbd; border-width: 0 1px; width: 17px; }
.scrollbar-props .sb-up { height: 17px; margin: 0 -1px; }

/* status */
.status {
  height: 35px;
  flex: none;
  margin: 0 -1px;
  background: #35618f;
  color: #fff;
  display: flex;
  align-items: center;
  padding: 0 3px 0 14px;
  position: relative;
}
.status-link { font: 13.4px/18px "Liberation Sans", "Noto Sans", sans-serif; color: #fff; text-decoration: underline; }
.status-page { margin-left: 8px; font-size: 12px; }
.status-tools { margin-left: 546px; display: flex; align-items: flex-start; height: 35px; }
.st { display: block; width: 19px; height: 30px; padding-top: 19px; margin-right: 2px; flex: none; }
.st i { display: block; height: 2px; background: #fff; margin: 0 1px; }
.st-on { background: #a6bdd8; }
.st-small { width: 6px; margin: 0 6px 0 8px; }
.st-mid { width: 6px; margin: 0 92px 0 38px; }
.st-zoom { width: 28px; margin-right: 20px; }
.st-dots { width: 12px; margin-right: 6px; }
.st-bar { width: 12px; margin-right: 14px; }
.st-small2 { width: 3px; margin-right: 8px; }
.st-dots2 { width: 12px; }
.grip { position: absolute; right: 2px; bottom: 4px; width: 10px; height: 10px; }

/* dialog */
.dialog {
  position: absolute;
  left: 511px;
  top: 490px;
  width: 562px;
  height: 220px;
  background: #fff;
  border: 1px solid #a4a4a4;
  display: flex;
  flex-direction: column;
}
.dlg-title { height: 23px; flex: none; background: #d2d2d2; display: flex; align-items: center; padding: 0 12px 0 7px; color: #333; font-size: 13px; }
.dlg-logo { width: 15px; height: 15px; margin-right: 6px; margin-top: -2px; }
.dlg-x { width: 10px; height: 10px; margin-left: auto; }
.banner { width: 560px; height: 70px; flex: none; }
.brand { font: 700 50px "Liberation Sans", sans-serif; fill: #fff; stroke: #fff; stroke-width: .8px; }
.dlg-body { padding: 11px 11px 0 11px; color: #111; }
.dlg-product { line-height: 16px; }
.dlg-row { display: flex; align-items: center; margin-top: 15px; }
.dlg-row-user { margin-top: 15px; }
.dlg-label { width: 114px; flex: none; }
.dlg-input { flex: 1; height: 23px; border: 1px solid #bdbdbd; color: #888; line-height: 21px; padding-left: 2px; }
.dlg-input-key { flex: none; width: 328px; font-family: "Liberation Sans", "Noto Sans", sans-serif; font-size: 12.5px; }
.dlg-btn { width: 90px; height: 23px; margin-left: 6px; border: 1px solid #bdbdbd; color: #777; text-align: center; line-height: 21px; }
```
